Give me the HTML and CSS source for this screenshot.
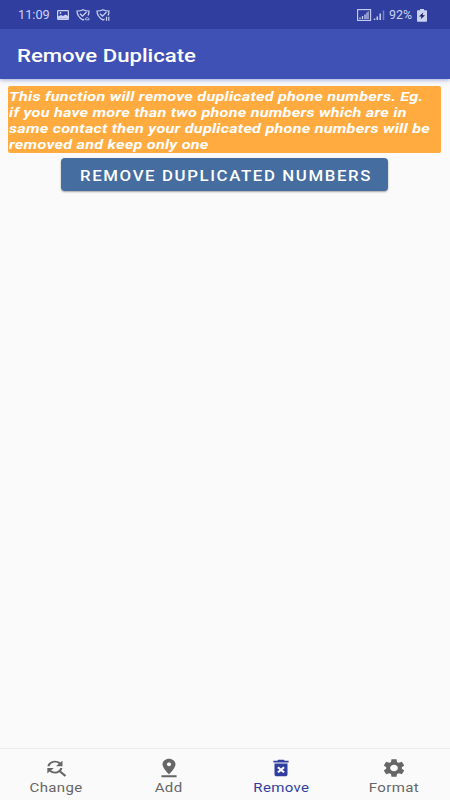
FILE: index.html
```
<!DOCTYPE html>
<html lang="en">
  <head>
    <meta charset="utf-8">
    <title>Remove Duplicate</title>
    <link rel="stylesheet" href="styles.css">
  </head>
  <body>
    <header>
      <div class="status">
        <span class="wide time">11:09</span>
        <svg class="picture" width="12" height="10" viewBox="0 0 12 10">
          <rect x=".6" y=".6" width="10.8" height="8.8" rx=".6" fill="none" stroke="currentColor" stroke-width="1.2"/>
          <path d="M1 8.8V6.5L4 5l2 1 2.5-1.5L11 6v2.8z" fill="currentColor"/>
          <circle cx="3.5" cy="3" r=".9" fill="currentColor"/>
        </svg>
        <svg class="shield" width="14" height="12" viewBox="0 0 14 12">
          <path d="M8 10.2L7 11C3.500 9 1 6.500 1 2q3.500 0 6-1.300Q9.500 2 13 2q0 2.500-1 4.500M4 4.800l2.500 2.400L10.500 3" fill="none" stroke="currentColor" stroke-width="1.200"/>
          <path d="M9.500 10.800h3.500q.8-1.300-.8-1.700-1.200-1.400-2.200.1-1.500.4-.5 1.600z" fill="none" stroke="currentColor" stroke-width=".8"/>
        </svg>
        <svg class="shield" width="14" height="12" viewBox="0 0 14 12">
          <path d="M8.500 10L7 11C3.500 9 1 6.500 1 2q3.500 0 6-1.300Q9.500 2 13 2q0 2.500-1 4.500M4 4.800l2.500 2.400L10.500 3" fill="none" stroke="currentColor" stroke-width="1.200"/>
          <path d="M10.500 7.800v4M12.800 7.800v4" stroke="currentColor" stroke-width="1.200"/>
        </svg>
        <svg class="signal" width="29" height="12" viewBox="0 0 29 12">
          <rect x=".6" y=".6" width="13" height="10.800" fill="none" stroke="currentColor" stroke-width="1.100"/>
          <path d="M3 10V8.500M5.500 10V7M8 10V5.500" stroke="currentColor" stroke-width="1.300"/>
          <path d="M9 10V4l3-2v8z" fill="currentColor" opacity=".6"/>
          <path d="M17.500 11V9.500M20.300 11V7.500M23.200 11V4.500" stroke="currentColor" stroke-width="1.500"/>
          <path d="M26.500 11V1.500" stroke="currentColor" stroke-width="1.500" opacity=".45"/>
        </svg>
        <span class="wide percent">92%</span>
        <svg class="battery" width="10" height="13" viewBox="0 0 10 13">
          <path d="M3 0h4v1.200h2.200q.8 0 .8.800v10q0 .8-.8.800H.8Q0 12.800 0 12V2q0-.8.8-.8H3z" fill="currentColor"/>
          <path d="M6.300 3.500L2 7.500h2.500L3.700 10.300 8 6.300H5.500z" fill="#151b58"/>
        </svg>
      </div>
      <div class="toolbar">
        <h1 class="wide title">Remove Duplicate</h1>
      </div>
    </header>

    <main>
      <p class="info">
        <span class="wide">This function will remove duplicated phone numbers. Eg.<br>
        if you have more than two phone numbers which are in<br>
        same contact then your duplicated phone numbers will be<br>
        removed and keep only one</span>
      </p>
      <button class="action"><span class="wide">REMOVE DUPLICATED NUMBERS</span></button>
    </main>

    <nav>
      <a class="item">
        <svg viewBox="0 0 24 24" preserveAspectRatio="none"><path d="M11 6c1.380 0 2.630.560 3.540 1.460L12 10h6V4l-2.050 2.050C14.680 4.780 12.930 4 11 4c-3.530 0-6.430 2.610-6.920 6H6.100c.460-2.280 2.480-4 4.900-4zm5.640 9.140c.660-.9 1.120-1.970 1.280-3.140H15.900c-.460 2.280-2.480 4-4.900 4-1.380 0-2.630-.560-3.540-1.460L10 12H4v6l2.050-2.050C7.320 17.220 9.070 18 11 18c1.550 0 2.980-.510 4.140-1.360L20 21.490 21.490 20l-4.850-4.860z"/></svg>
        <span class="wide">Change</span>
      </a>
      <a class="item">
        <svg viewBox="0 0 24 24" preserveAspectRatio="none"><path d="M18 8c0-3.310-2.690-6-6-6S6 4.690 6 8c0 4.500 6 11 6 11s6-6.500 6-11zm-8 0c0-1.100.9-2 2-2s2 .9 2 2-.890 2-2 2c-1.100 0-2-.9-2-2zM5 20v2h14v-2H5z"/></svg>
        <span class="wide">Add</span>
      </a>
      <a class="item active">
        <svg viewBox="0 0 24 24" preserveAspectRatio="none"><path d="M6 19c0 1.100.9 2 2 2h8c1.100 0 2-.9 2-2V7H6v12zm2.460-7.120l1.410-1.410L12 12.590l2.120-2.120 1.410 1.410L13.410 14l2.120 2.120-1.410 1.410L12 15.410l-2.120 2.120-1.410-1.410L10.590 14l-2.130-2.120zM15.500 4l-1-1h-5l-1 1H5v2h14V4z"/></svg>
        <span class="wide">Remove</span>
      </a>
      <a class="item">
        <svg viewBox="0 0 24 24" preserveAspectRatio="none"><path d="M19.140 12.940c.040-.3.060-.610.060-.940 0-.320-.020-.640-.070-.940l2.030-1.580c.180-.140.230-.410.120-.610l-1.920-3.320c-.120-.220-.370-.290-.590-.220l-2.390.960c-.5-.380-1.030-.7-1.620-.940l-.360-2.540c-.040-.240-.240-.410-.480-.410h-3.840c-.240 0-.430.170-.470.410l-.360 2.540c-.590.240-1.130.570-1.620.940l-2.390-.960c-.220-.080-.470 0-.590.220L2.740 8.870c-.120.210-.080.470.120.610l2.030 1.580c-.050.300-.090.630-.090.940s.020.640.070.940l-2.030 1.580c-.180.140-.230.410-.120.610l1.920 3.320c.120.220.370.290.590.220l2.390-.960c.5.380 1.030.7 1.620.940l.360 2.540c.050.240.240.410.480.410h3.840c.240 0 .440-.170.470-.410l.360-2.540c.590-.240 1.130-.560 1.620-.940l2.390.960c.220.080.470 0 .590-.220l1.920-3.320c.120-.220.070-.470-.120-.610l-2.010-1.580zM12 15.600c-1.980 0-3.600-1.620-3.600-3.600s1.620-3.600 3.600-3.600 3.600 1.620 3.600 3.600-1.620 3.600-3.600 3.600z"/></svg>
        <span class="wide">Format</span>
      </a>
    </nav>
  </body>
</html>
```
FILE: styles.css
```
body {
  margin: 0;
  height: 800px;
  display: flex;
  flex-direction: column;
  background: #fafafa;
  font-family: Roboto, sans-serif;
  overflow: hidden;
}

.wide {
  display: inline-block;
  white-space: nowrap;
  transform: scaleX(1.2);
  transform-origin: left center;
}

header {
  color: #fff;
  background: #3f51b5;
  box-shadow: 0 1px 4px rgba(63, 81, 181, 0.5);
}

.status {
  height: 29px;
  box-sizing: border-box;
  padding: 1px 23px 0 18px;
  display: flex;
  align-items: center;
  background: #303f9f;
  color: #ccd2f4;
  font-size: 12px;
}

.time {
  width: 39px;
  transform: scaleX(1.06);
}

.shield {
  margin-left: 7px;
}

.shield + .shield {
  margin-left: 6px;
}

.signal {
  margin-left: auto;
}

.percent {
  width: 24px;
  margin: 0 4px 0 3px;
  transform: scaleX(1.03);
}

.toolbar {
  height: 50px;
  box-sizing: border-box;
  padding: 2px 0 0 17px;
  display: flex;
  align-items: center;
}

.title {
  margin: 0;
  font-size: 18px;
  font-weight: 500;
  transform: scaleX(1.23);
}

main {
  flex: 1;
  padding: 7px 9px 0 8px;
  display: flex;
  flex-direction: column;
  align-items: center;
}

.info {
  width: 433px;
  height: 67px;
  box-sizing: border-box;
  margin: 0 0 5px;
  padding: 2px 0 0 1px;
  border-radius: 2px;
  background: #ffab40;
  color: #fff;
  font-size: 13.5px;
  font-weight: bold;
  font-style: italic;
  line-height: 16px;
  letter-spacing: 0.2px;
}

.action {
  width: 327px;
  height: 33px;
  padding: 2px 0 0 19px;
  border: 0;
  border-radius: 4px;
  background: #456d9f;
  box-shadow: 0 1px 2px rgba(0, 0, 0, 0.35);
  color: #fff;
  font: 500 14px Roboto, sans-serif;
  letter-spacing: 1.35px;
  text-align: left;
}

nav {
  height: 52px;
  box-sizing: border-box;
  padding-top: 8px;
  display: flex;
  border-top: 1px solid #ececec;
}

.item {
  flex: 1;
  display: flex;
  flex-direction: column;
  align-items: center;
  color: #666;
  font-size: 12.5px;
  line-height: 17px;
  letter-spacing: 0.3px;
}

.item svg {
  width: 26px;
  height: 22px;
  fill: currentColor;
}

.item .wide {
  transform-origin: center;
}

.active {
  color: #303f9f;
}
```
